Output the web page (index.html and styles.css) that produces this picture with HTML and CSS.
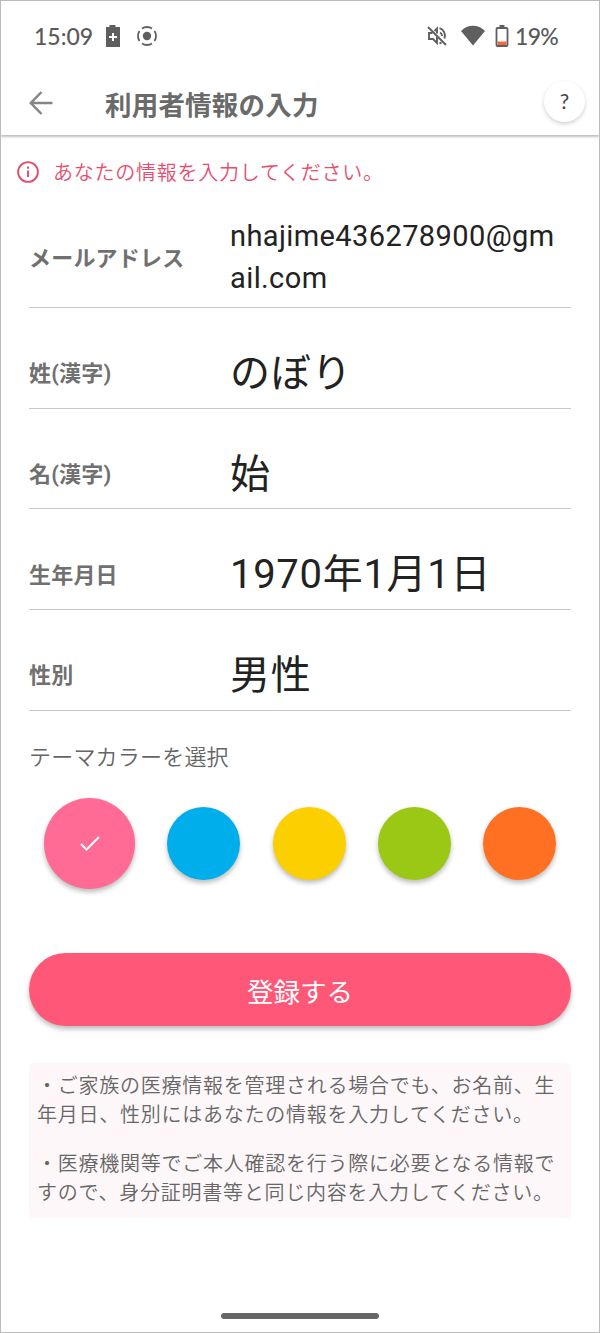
FILE: index.html
```
<!DOCTYPE html>
<html lang="ja">
<head>
    <meta charset="UTF-8">
    <meta name="viewport" content="width=device-width, initial-scale=1.0">
    <title>利用者情報の入力</title>
    <link rel="stylesheet" href="styles.css">
</head>
<body>
    <div class="screen">
        <div class="statusbar">
            <span class="time">15:09</span>
            <svg class="saver" width="16" height="22" viewBox="0 0 16 22">
                <path d="M4.500 0h6v2H15v20H1V2h3.500z" fill="#5f5f5f"/>
                <path d="M8 8v8M4 12h8" stroke="#fff" stroke-width="2"/>
            </svg>
            <svg class="record" width="22" height="22" viewBox="0 0 22 22">
                <circle cx="11" cy="11" r="4.200" fill="#5f5f5f"/>
                <circle cx="11" cy="11" r="9" fill="none" stroke="#5f5f5f" stroke-width="1.800" pathLength="80" stroke-dasharray="15 5" stroke-dashoffset="7.500"/>
            </svg>
            <svg class="mute" width="20" height="20" viewBox="0 0 20 20" fill="none" stroke="#5f5f5f" stroke-width="1.900">
                <path d="M1 1l18 18"/>
                <path d="M5.500 7H2v6h4l4 4v-6M7.500 5L10 2.500V7.500"/>
                <path d="M12.500 2.200c4 1 6.500 5.500 5 10.300M13 6.500c1.500.8 2 2 2 3.500M12.500 17.500l2-.8"/>
            </svg>
            <svg class="wifi" width="26" height="21" viewBox="0 0 26 21">
                <path d="M1 6C7.500-1 18.500-1 25 6L13 20.500z" fill="#5f5f5f"/>
            </svg>
            <svg class="battery" width="14" height="22" viewBox="0 0 14 22">
                <path d="M4.500 0h5v3h-5z" fill="#5f5f5f"/>
                <rect x="1.500" y="3" width="11" height="18" rx="1" fill="#fff" stroke="#5f5f5f" stroke-width="1.800"/>
                <path d="M2.500 16.500h9V20h-9z" fill="#f4693b"/>
            </svg>
            <span class="percent">19%</span>
        </div>

        <header class="appbar">
            <svg class="back" width="24" height="24" viewBox="0 0 24 24" fill="none" stroke="#858585" stroke-width="2.500">
                <path d="M12.500 1L1.800 12l10.700 11M2 12h21.500"/>
            </svg>
            <h1>利用者情報の入力</h1>
            <button class="help" type="button">?</button>
        </header>

        <main>
            <p class="alert">
                <svg width="22" height="22" viewBox="0 0 22 22">
                    <circle cx="11" cy="11" r="9.900" fill="none" stroke="#e0516f" stroke-width="1.900"/>
                    <path d="M11 9.500v6.500M11 5.500v2.200" stroke="#e0516f" stroke-width="2"/>
                </svg>
                <span>あなたの情報を入力してください。</span>
            </p>

            <form>
                <div class="row mail">
                    <span class="label">メールアドレス</span>
                    <span class="value">nhajime436278900@gmail.com</span>
                </div>
                <div class="row">
                    <span class="label">姓(漢字)</span>
                    <span class="value">のぼり</span>
                </div>
                <div class="row">
                    <span class="label">名(漢字)</span>
                    <span class="value">始</span>
                </div>
                <div class="row">
                    <span class="label">生年月日</span>
                    <span class="value">1970年1月1日</span>
                </div>
                <div class="row">
                    <span class="label">性別</span>
                    <span class="value">男性</span>
                </div>

                <p class="theme-title">テーマカラーを選択</p>
                <div class="colors">
                    <div class="color pink">
                        <svg width="20" height="16" viewBox="0 0 20 16" fill="none" stroke="#fff" stroke-width="2">
                            <path d="M1 8l5.500 5.500L19 1"/>
                        </svg>
                    </div>
                    <div class="color blue"></div>
                    <div class="color yellow"></div>
                    <div class="color green"></div>
                    <div class="color orange"></div>
                </div>

                <button class="submit" type="button">登録する</button>
            </form>

            <div class="notes">
                <p>・ご家族の医療情報を管理される場合でも、お名前、生年月日、性別にはあなたの情報を入力してください。</p>
                <p>・医療機関等でご本人確認を行う際に必要となる情報ですので、身分証明書等と同じ内容を入力してください。</p>
            </div>
        </main>

        <div class="homebar"></div>
    </div>
</body>
</html>
```
FILE: styles.css
```
*{
    box-sizing: border-box;
}
body{
    margin: 0;
    font-family: Roboto, "Noto Sans CJK JP", sans-serif;
    color: #666;
}
h1, p{
    margin: 0;
}
button{
    border: none;
    font-family: inherit;
}
svg{
    display: block;
    flex: none;
}
.screen{
    width: 600px;
    height: 1333px;
    border: 1px solid #bbb;
    background: #fff;
    display: flex;
    flex-direction: column;
    overflow: hidden;
}
.statusbar{
    height: 69px;
    padding: 0 42px 0 33px;
    display: flex;
    align-items: center;
    font-family: Lato, sans-serif;
    font-size: 23px;
    color: #5a5a5a;
}
.time{
    width: 71px;
    font-weight: 500;
}
.record{
    margin-left: 15px;
}
.mute{
    margin-left: auto;
}
.wifi{
    margin-left: 13px;
}
.battery{
    margin: 0 6px 0 9px;
}
.percent{
    width: 42px;
    font-weight: 500;
    letter-spacing: -0.7px;
}
.appbar{
    height: 65px;
    flex: none;
    padding: 0 14px 0 28px;
    display: flex;
    align-items: center;
    box-shadow: 0 2px 2px rgba(0,0,0,0.25);
}
.appbar h1{
    margin: 6px 0 0 52px;
    font-size: 26.500px;
    line-height: 38px;
    font-weight: 700;
    letter-spacing: 0.2px;
    color: #6a6a6a;
}
.help{
    width: 41px;
    height: 41px;
    margin-left: auto;
    margin-bottom: 3px;
    padding: 0 0 2px;
    border-radius: 50%;
    background: #fff;
    box-shadow: 0 2px 4px rgba(0,0,0,0.18);
    color: #444;
    font-family: Lato, sans-serif;
    font-size: 21px;
}
.alert{
    height: 72px;
    padding: 1px 0 0 16px;
    display: flex;
    align-items: center;
    gap: 14px;
    color: #e84d70;
    font-size: 20px;
    font-weight: 350;
    letter-spacing: 0.75px;
}
form{
    padding: 0 28px;
}
.row{
    height: 100.700px;
    padding-top: 32px;
    display: flex;
    align-items: center;
    border-bottom: 1px solid #c8c8c8;
}
.label{
    width: 201px;
    flex: none;
    padding-bottom: 5px;
    font-size: 22px;
    font-weight: 700;
    letter-spacing: 0.2px;
    color: #707070;
}
.value{
    color: #222;
    font-size: 40px;
    line-height: 58px;
    letter-spacing: 0.7px;
}
.mail{
    height: 101px;
    padding: 0 8px 0 0;
}
.mail .label{
    padding-bottom: 2px;
}
.mail .value{
    font-size: 29px;
    line-height: 42px;
    letter-spacing: 0.4px;
    word-break: break-all;
}
.theme-title{
    padding-top: 31px;
    font-size: 22px;
    line-height: 32px;
    font-weight: 350;
    letter-spacing: 0.2px;
}
.colors{
    height: 91px;
    margin-top: 24px;
    padding: 0 15px;
    display: flex;
    justify-content: space-between;
    align-items: center;
}
.color{
    width: 73px;
    height: 73px;
    border-radius: 50%;
    box-shadow: 0 3px 5px rgba(0,0,0,0.27);
}
.pink{
    width: 91px;
    height: 91px;
    display: flex;
    align-items: center;
    justify-content: center;
    padding-top: 2px;
    background: #ff6b94;
}
.blue{
    background: #00aeec;
}
.yellow{
    background: #fbcf00;
}
.green{
    background: #9bc814;
}
.orange{
    background: #ff7023;
}
.submit{
    display: block;
    width: 100%;
    height: 73px;
    margin-top: 64px;
    padding: 2px 0 0;
    border-radius: 37px;
    background: #ff5777;
    box-shadow: 0 3px 5px rgba(0,0,0,0.27);
    color: #fff;
    font-size: 26.500px;
}
.notes{
    height: 155px;
    margin: 37px 28px 0;
    padding: 9px 8px;
    border-radius: 4px;
    background: #fef7f9;
    font-size: 20px;
    font-weight: 350;
    line-height: 29.500px;
    letter-spacing: 0.75px;
}
.notes p + p{
    margin-top: 19px;
}
.homebar{
    width: 158px;
    height: 6px;
    margin: auto auto 13px;
    border-radius: 3px;
    background: #666;
}
```
